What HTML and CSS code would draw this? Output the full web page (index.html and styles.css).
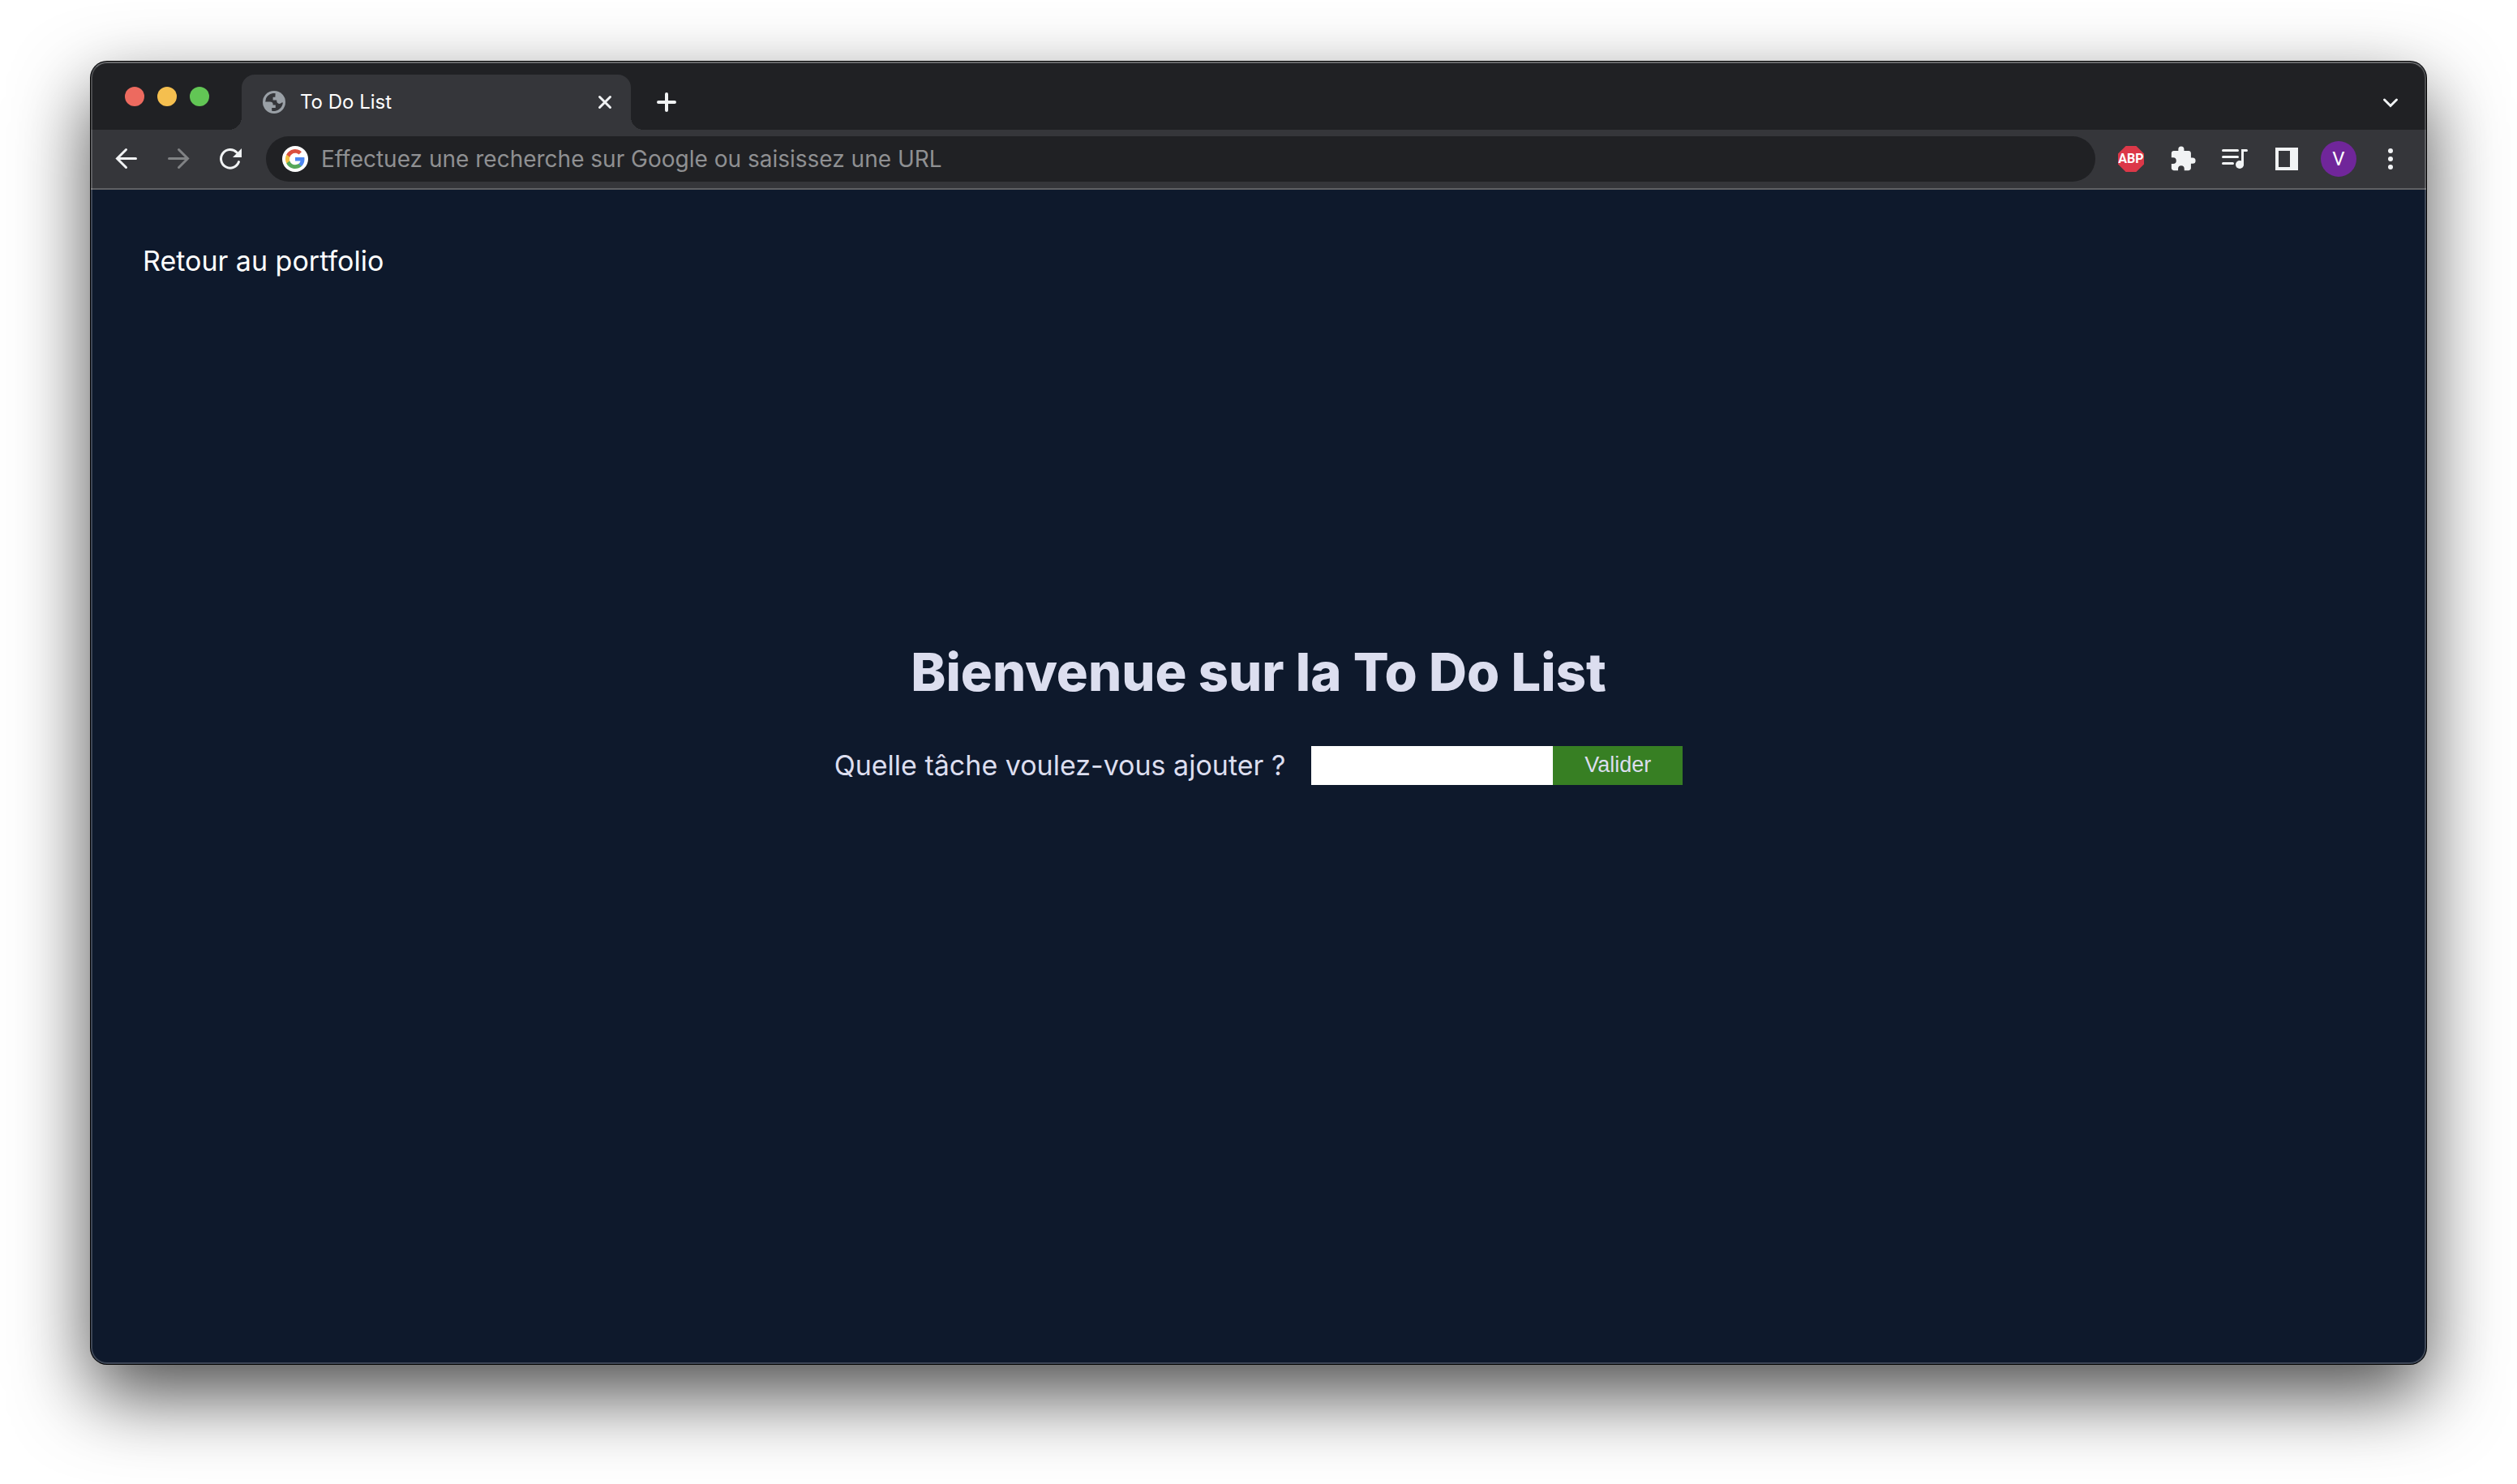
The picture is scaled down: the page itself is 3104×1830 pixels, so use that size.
FILE: index.html
```html
<!DOCTYPE html>
<html lang="fr">
<head>
<meta charset="utf-8">
<meta name="viewport" content="width=device-width, initial-scale=1">
<title>To Do List</title>
<link rel="stylesheet" href="styles.css">
</head>
<body>
<div class="window">
  <div class="tabstrip">
    <div class="lights">
      <button class="light light-close" aria-label="Fermer"></button>
      <button class="light light-min" aria-label="Réduire"></button>
      <button class="light light-max" aria-label="Agrandir"></button>
    </div>
    <div class="tab">
      <svg width="28" height="28" viewBox="0 0 28 28" aria-hidden="true">
        <circle cx="14" cy="14" r="14" fill="#9aa0a6"/>
        <path fill="#35363a" d="M15.500 3C10 2.600 6 5 4 9.500L3.200 13.500H9c2.200 0 3.600 1.200 3.600 3v1h3.200V21H11.200v3.700c5 1.300 10.200-1.500 12.600-6.200.6-1.300 1-2.600 1.100-4h-1.600c-.8 1.400-3.300 1.900-4.700.7-1.300-1-1.400-2.300-1.400-3.700h-4.600V7.800h2.800c0-2.300.4-3.600.1-4.800z"/>
      </svg>
      <span class="tab-title">To Do List</span>
      <button class="icon-btn tab-close" aria-label="Fermer l'onglet">
        <svg width="18" height="18" viewBox="0 0 18 18" aria-hidden="true"><path class="line" d="M2.500 2.500l13 13M15.500 2.500l-13 13"/></svg>
      </button>
    </div>
    <button class="icon-btn tab-new" aria-label="Nouvel onglet">
      <svg width="24" height="24" viewBox="0 0 24 24" aria-hidden="true"><path class="line thick" d="M12 2v20M2 12h20"/></svg>
    </button>
    <button class="icon-btn tab-search" aria-label="Rechercher dans les onglets">
      <svg width="20" height="20" viewBox="0 0 20 20" aria-hidden="true"><path class="line" d="M2.500 7l7.500 7.500L17.500 7"/></svg>
    </button>
  </div>

  <div class="toolbar">
    <div class="group">
      <button class="icon-btn" aria-label="Retour">
        <svg width="32" height="32" viewBox="0 0 32 32" aria-hidden="true"><path class="line" d="M27.500 15.500H5M15.500 4.500L4.500 15.500l11 11"/></svg>
      </button>
      <button class="icon-btn dim" aria-label="Avancer">
        <svg width="32" height="32" viewBox="0 0 32 32" aria-hidden="true"><path class="line" d="M4.500 15.500H27M16.500 4.500l11 11-11 11"/></svg>
      </button>
      <button class="icon-btn" aria-label="Actualiser">
        <svg width="32" height="32" viewBox="0 0 32 32" aria-hidden="true"><path class="line" d="M26.500 19.600A11.300 11.300 0 1 1 24 8"/><path fill="#f1f3f4" d="M30 3v11H19z"/></svg>
      </button>
    </div>
    <div class="omnibox">
      <svg width="32" height="32" viewBox="0 0 32 32" aria-hidden="true">
        <circle cx="16" cy="16" r="16" fill="#fff"/>
        <g transform="translate(4 4)">
          <path fill="#4c86f0" d="M23.500 12.300c0-.9-.1-1.600-.2-2.300H12v4.500h6.500c-.3 1.500-1.100 2.800-2.400 3.600v3h3.900c2.200-2.100 3.500-5.100 3.500-8.800z"/>
          <path fill="#55a75a" d="M12 24c3.200 0 5.900-1.100 7.900-2.900l-3.900-3c-1.100.7-2.400 1.200-4 1.200-3.100 0-5.700-2.100-6.700-4.900h-4v3.100C3.300 21.400 7.300 24 12 24z"/>
          <path fill="#f2bf42" d="M5.300 14.300a7.200 7.200 0 0 1 0-4.600V6.600h-4a12 12 0 0 0 0 10.800z"/>
          <path fill="#da4f3f" d="M12 4.800c1.800 0 3.300.6 4.600 1.800L20 3.200A12 12 0 0 0 1.300 6.600l4 3.100c1-2.800 3.600-4.900 6.700-4.900z"/>
        </g>
      </svg>
      <input class="url" type="text" aria-label="Barre d'adresse" placeholder="Effectuez une recherche sur Google ou saisissez une URL">
    </div>
    <div class="group">
      <button class="icon-btn" aria-label="Adblock Plus"><span class="abp">ABP</span></button>
      <button class="icon-btn" aria-label="Extensions">
        <svg width="34" height="34" viewBox="0 0 24 24" aria-hidden="true"><path fill="#f1f3f4" d="M20.500 11H19V7c0-1.100-.9-2-2-2h-4V3.500a2.500 2.500 0 0 0-5 0V5H4c-1.100 0-2 .9-2 2v3.800h1.500a2.700 2.700 0 0 1 0 5.400H2V20c0 1.100.9 2 2 2h3.800v-1.500a2.700 2.700 0 0 1 5.400 0V22H17c1.100 0 2-.9 2-2v-4h1.500a2.500 2.500 0 0 0 0-5z"/></svg>
      </button>
      <button class="icon-btn" aria-label="Contrôle des médias">
        <svg width="32" height="32" viewBox="0 0 32 32" aria-hidden="true"><path class="line" d="M1.500 5.500h18M1.500 13.500h18M1.500 21.500h12M25.500 23V5.500h5"/><circle cx="22" cy="23" r="5" fill="#f1f3f4"/></svg>
      </button>
      <button class="icon-btn" aria-label="Panneau latéral">
        <svg width="28" height="28" viewBox="0 0 28 28" aria-hidden="true"><path fill="#f1f3f4" fill-rule="evenodd" d="M0 0h28v28H0zM4 4v20h14V4z"/></svg>
      </button>
      <button class="icon-btn" aria-label="Profil"><span class="avatar">V</span></button>
      <button class="icon-btn" aria-label="Menu">
        <svg width="28" height="28" viewBox="0 0 28 28" aria-hidden="true"><g fill="#f1f3f4"><circle cx="14" cy="4" r="3"/><circle cx="14" cy="14" r="3"/><circle cx="14" cy="24" r="3"/></g></svg>
      </button>
    </div>
  </div>

  <div class="page">
    <header class="page-header"><a class="back" href="#">Retour au portfolio</a></header>
    <main class="main">
      <h1 class="title">Bienvenue sur la To Do List</h1>
      <form class="form">
        <label class="label" for="task">Quelle tâche voulez-vous ajouter ?</label>
        <input class="task" id="task" type="text">
        <button class="submit" type="button">Valider</button>
      </form>
    </main>
  </div>
</div>
</body>
</html>
```
FILE: styles.css
```css
* {
  box-sizing: border-box;
}

body {
  display: flex;
  min-height: 100vh;
  margin: 0;
  padding: 76px 112px 148px;
  background: #fff;
  font-family: Inter, "Liberation Sans", sans-serif;
}

button,
input {
  margin: 0;
  padding: 0;
  border: 0;
  font: inherit;
}

svg {
  display: block;
  flex: none;
}

.window {
  position: relative;
  display: flex;
  flex: 1;
  flex-direction: column;
  min-width: 0;
  overflow: hidden;
  border-radius: 20px;
  background: #0e192c;
  box-shadow: 0 0 0 1px #000, 0 38px 94px rgba(0, 0, 0, 0.7);
}

/* light rim drawn over the window's edge */
.window::after {
  content: "";
  position: absolute;
  inset: 0;
  border: 2px solid rgba(255, 255, 255, 0.2);
  border-top-color: rgba(255, 255, 255, 0.32);
  border-radius: 20px;
  pointer-events: none;
}

.tabstrip {
  display: flex;
  align-items: flex-end;
  height: 84px;
  padding: 0 16px 0 42px;
  background: #202124;
}

.lights {
  display: flex;
  gap: 16px;
  margin-right: 40px;
  padding-bottom: 29px;
}

.light {
  width: 24px;
  height: 24px;
  border-radius: 50%;
}

.light-close { background: #ed6a5f; }
.light-min { background: #f5bf4f; }
.light-max { background: #62c655; }

.tab {
  position: relative;
  display: flex;
  align-items: center;
  width: 480px;
  height: 68px;
  padding: 0 4px 0 26px;
  border-radius: 16px 16px 0 0;
  background: #35363a;
}

.tab::before,
.tab::after {
  content: "";
  position: absolute;
  bottom: 0;
  width: 16px;
  height: 16px;
}

.tab::before {
  right: 100%;
  background: radial-gradient(circle at 0 0, #202124 16px, #35363a 16px);
}

.tab::after {
  left: 100%;
  background: radial-gradient(circle at 100% 0, #202124 16px, #35363a 16px);
}

.tab-title {
  flex: 1;
  margin-left: 18px;
  color: #fff;
  font-size: 24px;
  line-height: 32px;
}

.icon-btn {
  display: flex;
  align-items: center;
  justify-content: center;
  width: 56px;
  height: 56px;
  background: none;
}

.tab-new,
.tab-search {
  height: 68px;
}

.tab-new {
  margin-left: 16px;
}

.tab-search {
  margin-left: auto;
}

.line {
  fill: none;
  stroke: #f1f3f4;
  stroke-width: 3;
  stroke-linecap: round;
}

.thick {
  stroke-width: 4;
}

.dim {
  opacity: 0.4;
}

.toolbar {
  display: flex;
  align-items: center;
  gap: 16px;
  height: 74px;
  padding: 0 16px;
  border-bottom: 2px solid #5f6063;
  background: #35363a;
}

.group {
  display: flex;
  gap: 8px;
}

.omnibox {
  display: flex;
  flex: 1;
  align-items: center;
  gap: 16px;
  height: 56px;
  padding: 0 20px;
  border-radius: 28px;
  background: #202124;
}

.url {
  flex: 1;
  min-width: 0;
  background: none;
  color: #e8eaed;
  font-size: 28px;
  outline: none;
}

.url::placeholder {
  color: #8f9092;
  opacity: 1;
}

.abp {
  width: 32px;
  background: #dc3848;
  clip-path: polygon(30% 0, 70% 0, 100% 30%, 100% 70%, 70% 100%, 30% 100%, 0 70%, 0 30%);
  color: #fff;
  font-family: Roboto, sans-serif;
  font-size: 16px;
  font-weight: 700;
  line-height: 32px;
  text-align: center;
}

.avatar {
  width: 44px;
  border-radius: 50%;
  background: #70269a;
  color: #fff;
  font-family: Roboto, sans-serif;
  font-size: 24px;
  line-height: 44px;
}

.page {
  display: flex;
  flex: 1;
  flex-direction: column;
}

.page-header {
  padding: 64px 64px 0;
  line-height: 48px;
}

.back {
  color: #fff;
  font-size: 34px;
  text-decoration: none;
}

.main {
  display: flex;
  flex: 1;
  flex-direction: column;
  align-items: center;
  justify-content: center;
  gap: 43px;
  padding-bottom: 286px;
  color: #dcdeef;
}

.title {
  margin: 0;
  font-size: 65px;
  font-weight: 800;
  line-height: 96px;
}

.form {
  display: flex;
  align-items: center;
}

.label {
  margin-right: 32px;
  font-size: 34px;
  line-height: 48px;
}

.task {
  width: 298px;
  height: 48px;
  padding: 0 8px;
  background: #fff;
  font-size: 27px;
}

.submit {
  width: 160px;
  height: 48px;
  background: #377f23;
  color: #dcdeef;
  font-family: "Liberation Sans", Arial, sans-serif;
  font-size: 27px;
}
```
